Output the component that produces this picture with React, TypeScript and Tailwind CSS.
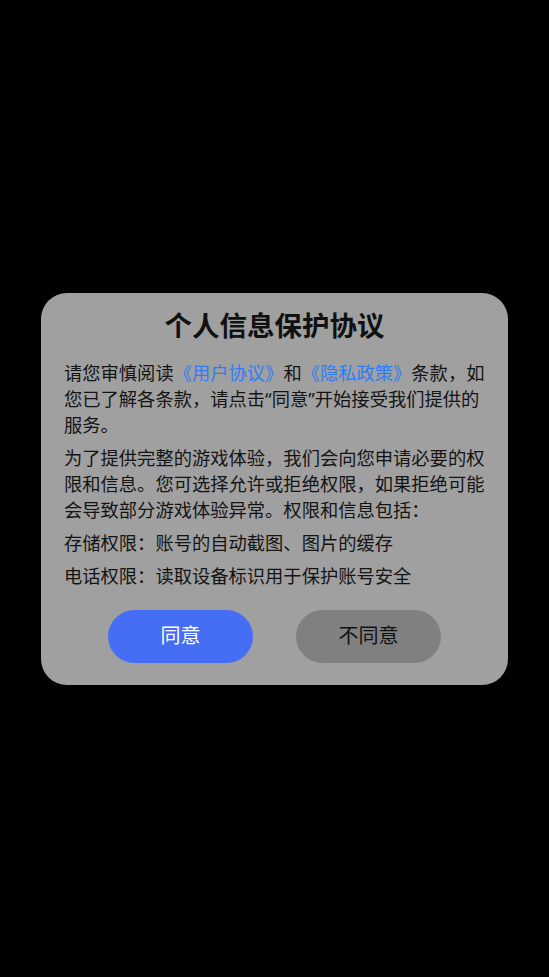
export default function App() {
  return (
    <div
      className="w-[549px] h-[977px] bg-black flex items-center justify-center"
      style={{ fontFamily: '"Noto Sans", "Noto Sans CJK SC", sans-serif' }}
    >
      <div className="w-[467px] h-[392px] bg-[#a0a0a0] rounded-[26px] px-[23px] pt-[14px] pb-[22px] flex flex-col">
        <h1 className="text-[27.5px] leading-[38px] font-bold text-[#111] text-center">个人信息保护协议</h1>
        <div className="mt-[15px] text-[18.3px] leading-[26px] text-[#141414] flex flex-col gap-[7px]">
          <p>
            请您审慎阅读<span className="text-[#2f7cf6]">《用户协议》</span>和<span className="text-[#2f7cf6]">《隐私政策》</span>条款，如您已了解各条款，请点击“同意”开始接受我们提供的服务。
          </p>
          <p>为了提供完整的游戏体验，我们会向您申请必要的权限和信息。您可选择允许或拒绝权限，如果拒绝可能会导致部分游戏体验异常。权限和信息包括：</p>
          <p>存储权限：账号的自动截图、图片的缓存</p>
          <p>电话权限：读取设备标识用于保护账号安全</p>
        </div>
        <div className="mt-auto flex justify-center gap-[43px]">
          <button className="w-[145px] h-[53px] rounded-full bg-[#466ef5] text-white text-[20px]">同意</button>
          <button className="w-[145px] h-[53px] rounded-full bg-[#808080] text-[#111] text-[20px]">不同意</button>
        </div>
      </div>
    </div>
  );
}
